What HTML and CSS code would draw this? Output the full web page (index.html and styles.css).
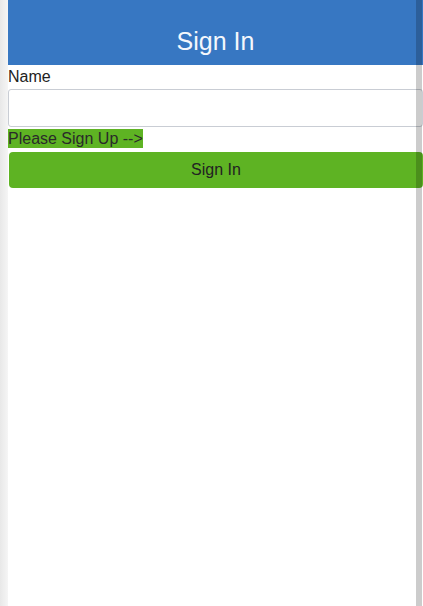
FILE: index.html
```html
<!DOCTYPE html>
<html>
<head>
<meta charset="utf-8">
<title>Sign In</title>
<link rel="stylesheet" href="styles.css">
</head>
<body>
<div class="page">
  <header class="topbar"><h1 class="title">Sign In</h1></header>
  <form class="form">
    <label class="label" for="name">Name</label>
    <input class="input" id="name" type="text">
    <div class="signup-row"><span class="signup">Please Sign Up --&gt;</span></div>
    <button class="btn" type="button">Sign In</button>
  </form>
</div>
<div class="scrollbar"></div>
</body>
</html>
```
FILE: styles.css
```css
html {
  height: 100%;
  background: linear-gradient(to right, #e8e8e8 0, #f5f5f5 8px, #ffffff 8px);
}
body {
  margin: 0 0 0 8px;
  width: 415px;
  min-height: 606px;
  background: #ffffff;
  font-family: "Liberation Sans", Arial, sans-serif;
  font-size: 16px;
  color: #222222;
  overflow: hidden;
}
.page {
  width: 415px;
}
.topbar {
  height: 65px;
  box-sizing: border-box;
  background: #3777c2;
  padding-top: 28px;
}
.title {
  margin: 0;
  font-size: 25px;
  font-weight: normal;
  line-height: 27px;
  color: #f4f7fc;
  text-align: center;
}
.form {
  display: flex;
  flex-direction: column;
  align-items: flex-start;
}
.label {
  margin-top: 3px;
  line-height: 18px;
  color: #222;
}
.input {
  margin: 3px 0 0 0;
  width: 415px;
  height: 38px;
  box-sizing: border-box;
  border: 1px solid #c9cdd4;
  border-radius: 3px;
  background: #fff;
  font: inherit;
  padding: 0 8px;
}
.signup-row {
  margin-top: 2px;
  line-height: 19px;
  height: 19px;
}
.signup {
  display: inline-block;
  background: #5eb323;
  color: #2a2a2a;
  line-height: 19px;
}
.btn {
  margin: 4px 0 0 1px;
  width: 414px;
  height: 36px;
  border: none;
  border-radius: 4px;
  background: #5eb323;
  color: #222;
  font-family: "Liberation Sans", Arial, sans-serif;
  font-size: 16px;
  padding: 0;
}
.scrollbar {
  position: fixed;
  top: 0;
  left: 416px;
  width: 6px;
  height: 606px;
  background: rgba(0, 0, 0, 0.2);
}
```
